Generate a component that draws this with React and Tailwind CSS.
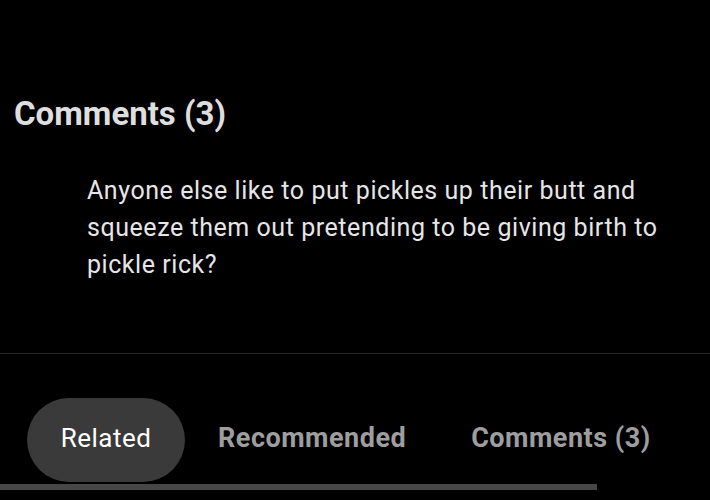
export default function App() {
  return (
    <div className="h-[500px] w-[710px] overflow-hidden bg-black" style={{ fontFamily: "Roboto, 'Noto Sans', sans-serif" }}>
      <h2 className="pt-[94px] pl-[14px] text-[33px] font-bold leading-[40px] text-[#dedede]">Comments (3)</h2>
      <p className="mt-[38px] pl-[87px] pr-[30px] text-[25px] leading-[37px] tracking-[0.55px] text-[#e6e6e6]">
        Anyone else like to put pickles up their butt and squeeze them out pretending to be giving birth to pickle rick?
      </p>
      <div className="mt-[70px] h-px w-full bg-[#262626]" />
      <div className="mt-[44px] flex items-center pl-[27px]">
        <div className="flex h-[84px] w-[158px] items-center justify-center rounded-full bg-[#3a3a3a] pb-[3px] text-[26px] tracking-[0.5px] text-white">Related</div>
        <div className="flex h-[84px] items-center pb-[3px] pl-[33px] text-[27px] font-bold tracking-[0.5px] text-[#9e9e9e]">Recommended</div>
        <div className="flex h-[84px] items-center pb-[3px] pl-[65px] text-[27px] font-bold tracking-[0.5px] text-[#9e9e9e]">Comments (3)</div>
      </div>
      <div className="mt-[2px] h-[6px] w-[597px] bg-[#474747]" />
    </div>
  );
}
